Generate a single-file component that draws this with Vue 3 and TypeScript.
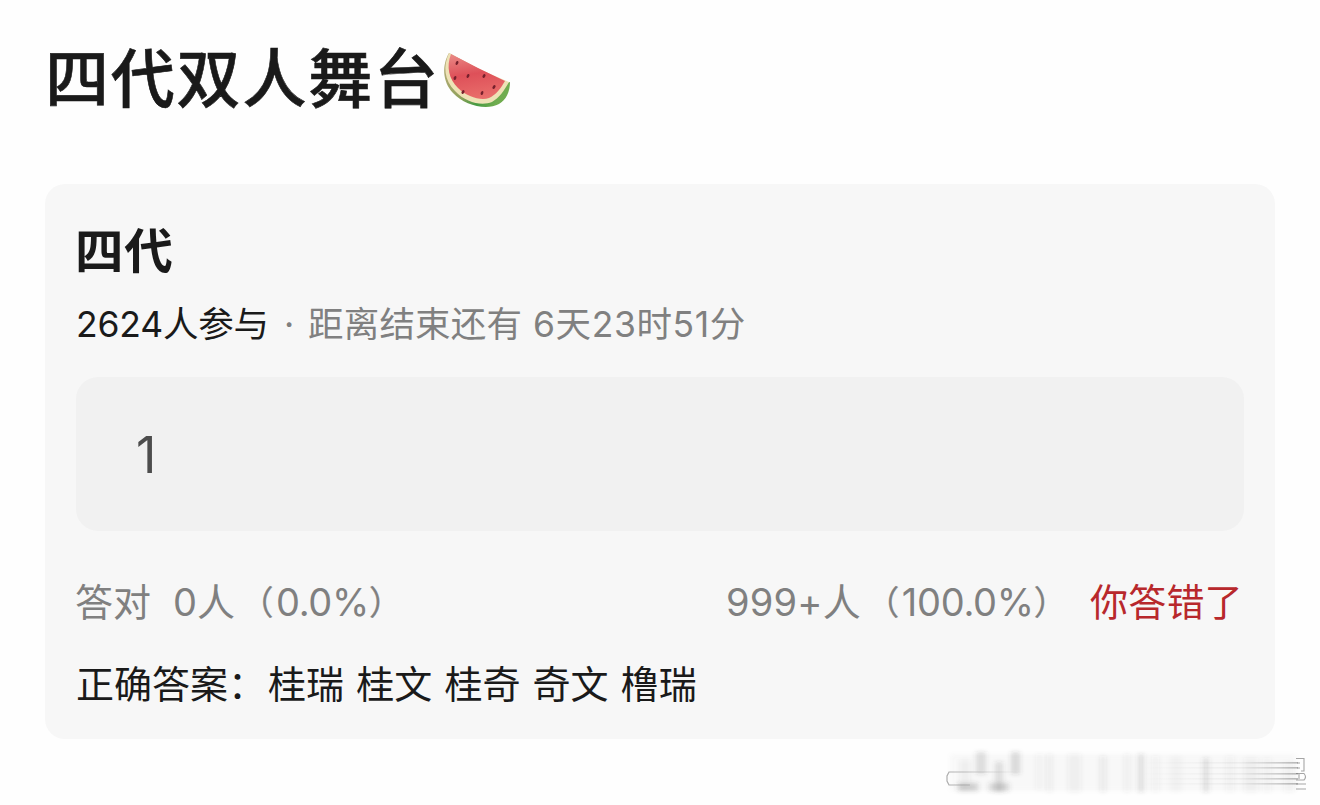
<script setup lang="ts">
interface Streak { x: number; y: number; w: number; h: number; o: number }
interface Seed { x: number; y: number; r: number }

const answers: string[] = ['桂瑞', '桂文', '桂奇', '奇文', '橹瑞']

const seeds: Seed[] = [
  { x: 22, y: 18, r: 25 }, { x: 33, y: 31, r: 25 }, { x: 20, y: 33, r: 20 },
  { x: 49, y: 31, r: 30 }, { x: 59, y: 42, r: 35 }, { x: 47, y: 48, r: 20 },
  { x: 28, y: 47, r: 30 },
]

const streaks: Streak[] = [
  { x: 30, y: 12, w: 10, h: 22, o: 0.11 }, { x: 65, y: 12, w: 9, h: 22, o: 0.12 },
  { x: 12, y: 43, w: 20, h: 8, o: 0.16 }, { x: 14, y: 20, w: 10, h: 30, o: 0.04 },
  { x: 49, y: 22, w: 8, h: 30, o: 0.11 }, { x: 43, y: 43, w: 20, h: 8, o: 0.14 },
  { x: 90, y: 14, w: 7, h: 36, o: 0.03 }, { x: 101, y: 14, w: 5, h: 38, o: 0.05 },
  { x: 122, y: 14, w: 13, h: 38, o: 0.04 }, { x: 154, y: 16, w: 6, h: 36, o: 0.06 },
  { x: 178, y: 14, w: 6, h: 38, o: 0.04 }, { x: 192, y: 14, w: 6, h: 38, o: 0.1 },
  { x: 206, y: 16, w: 7, h: 36, o: 0.03 }, { x: 224, y: 16, w: 12, h: 36, o: 0.02 },
  { x: 257, y: 18, w: 6, h: 34, o: 0.1 }, { x: 280, y: 16, w: 8, h: 36, o: 0.03 },
  { x: 298, y: 18, w: 14, h: 34, o: 0.04 }, { x: 317, y: 18, w: 8, h: 34, o: 0.03 },
  { x: 338, y: 22, w: 10, h: 30, o: 0.03 },
]
</script>

<template>
  <main class="page">
    <header class="title">
      <h1>四代双人舞台</h1>
      <svg class="melon" viewBox="0 0 84 70" width="84" height="70" aria-hidden="true">
        <defs>
          <linearGradient id="flesh" x1="0.3" y1="0" x2="0.5" y2="1">
            <stop offset="0" stop-color="#e98582" />
            <stop offset="0.45" stop-color="#de5059" />
            <stop offset="1" stop-color="#e96e6b" />
          </linearGradient>
          <linearGradient id="rind" x1="0" y1="0" x2="1" y2="0.4">
            <stop offset="0" stop-color="#b9ad7b" />
            <stop offset="0.5" stop-color="#8fa15b" />
            <stop offset="0.75" stop-color="#459a42" />
            <stop offset="1" stop-color="#70ac4f" />
          </linearGradient>
        </defs>
        <path d="M14 8 C7 20 7 36 18 48 C29 60 51 66 64 59 C71 55 75 47 75 37 L70 38 Z" fill="url(#rind)" />
        <path d="M14 8 C8 21 9 35 20 46 C31 58 47 61 57 57 C64 53 69 46 74 37 Q42 24 14 8 Z" fill="#eee2b6" />
        <path d="M16 9 C11 22 14 34 23 43 C32 52 46 56 54 53 C61 50 66 43 70 36 Q42 23 16 9 Z" fill="url(#flesh)" />
        <ellipse v-for="(s, i) in seeds" :key="i" :cx="s.x" :cy="s.y" rx="1.3" ry="2.1" fill="#76202c" :transform="`rotate(${s.r} ${s.x} ${s.y})`" />
      </svg>
    </header>

    <section class="card">
      <h2>四代</h2>
      <p class="meta">
        <span class="joined">2624人参与</span>
        <span class="dot">·</span>
        <span class="remain">距离结束还有</span>
        <span class="time">6天23时51分</span>
      </p>
      <div class="option">1</div>
      <div class="stats">
        <span class="label">答对</span>
        <span class="count">0人<i class="open">（</i><span class="rate">0.0%</span><i class="close">）</i></span>
        <span class="total">999+人<i class="open">（</i><span class="rate">100.0%</span><i class="close">）</i></span>
        <span class="wrong">你答错了</span>
      </div>
      <p class="answer">
        <span class="key">正确答案：</span>
        <span v-for="a in answers" :key="a" class="name">{{ a }}</span>
      </p>
    </section>

    <svg class="watermark" viewBox="0 0 390 65" width="390" height="65" aria-hidden="true">
      <defs>
        <filter id="soft" x="-10%" y="-20%" width="120%" height="140%"><feGaussianBlur stdDeviation="2.6 2" /></filter>
        <linearGradient id="lines" x1="0" x2="1">
          <stop offset="0" stop-color="#888" stop-opacity="0" />
          <stop offset="0.65" stop-color="#888" stop-opacity="0.1" />
          <stop offset="1" stop-color="#666" stop-opacity="0.45" />
        </linearGradient>
        <linearGradient id="stroke" x1="0" x2="1">
          <stop offset="0" stop-color="#777" stop-opacity="0.6" />
          <stop offset="1" stop-color="#999" stop-opacity="0" />
        </linearGradient>
      </defs>
      <rect x="20" y="14" width="346" height="37" fill="#777" opacity="0.04" filter="url(#soft)" />
      <g filter="url(#soft)" fill="#444">
        <rect v-for="(s, i) in streaks" :key="i" :x="s.x + 16" :y="s.y" :width="s.w" :height="s.h" :opacity="s.o * 1.4" />
      </g>
      <rect v-for="y in [22, 27, 33, 38, 43]" :key="y" x="210" :y="y" width="158" height="1.6" fill="url(#lines)" />
      <path d="M95 32 H19 L17 36 V41 L19 45 H40" fill="none" stroke="url(#stroke)" stroke-width="1.2" />
      <g fill="none" stroke="#777" stroke-width="1.1" opacity="0.65">
        <path d="M366 18.500 H374 V31 H371" />
        <path d="M367 23 H370 M367 28 H370 M366 33.500 H374 Q377 37 374 40 H366 M369 34 V39 M366 44 H376 M366 49 H376" />
      </g>
    </svg>
  </main>
</template>

<style>
body { margin: 0; background: #fff; }
</style>

<style scoped>
.page {
  position: relative;
  box-sizing: border-box;
  width: 1320px;
  height: 805px;
  padding: 30px 45px 0;
  background: #fefefe;
  color: #1a1a1a;
  font-family: Inter, "Noto Sans CJK SC", sans-serif;
  overflow: hidden;
}
h1, h2, p { margin: 0; }
.title { display: flex; align-items: center; height: 96px; }
h1 {
  font-size: 64px;
  font-weight: 500;
  line-height: 96px;
  letter-spacing: 1.8px;
  width: 390px;
  padding-top: 1px;
  white-space: nowrap;
  -webkit-text-stroke: 0.6px #1a1a1a;
}
.melon { flex: none; margin-top: 4px; }
.card {
  box-sizing: border-box;
  width: 1230px;
  height: 555px;
  margin-top: 58px;
  padding: 33px 31px 0;
  border-radius: 20px;
  background: #f7f7f7;
}
h2 { font-size: 48.5px; font-weight: 700; line-height: 70px; letter-spacing: 0.8px; margin-left: -1px; }
.meta {
  display: flex;
  height: 50px;
  line-height: 50px;
  margin-top: 13px;
  font-size: 35.5px;
  white-space: nowrap;
}
.joined { width: 207px; letter-spacing: -0.2px; }
.dot { width: 25px; padding-left: 1px; box-sizing: border-box; color: #808080; }
.remain { width: 225px; color: #808080; letter-spacing: 0.2px; }
.time { color: #808080; letter-spacing: 0.6px; }
.option {
  box-sizing: border-box;
  height: 154px;
  margin-top: 27px;
  padding-left: 60px;
  border-radius: 22px;
  background: #f1f1f1;
  color: #4d4d4d;
  font-size: 50px;
  line-height: 156px;
}
.stats {
  display: flex;
  height: 56px;
  line-height: 56px;
  margin-top: 43px;
  font-size: 38px;
  color: #808080;
  white-space: nowrap;
}
.label { width: 98px; margin-left: -1px; }
.total { width: 364px; margin-left: auto; letter-spacing: 0.2px; }
.rate { letter-spacing: -0.3px; }
.open, .close {
  display: inline-block;
  box-sizing: border-box;
  font-style: normal;
  font-size: 33.5px;
  line-height: 40px;
  vertical-align: 2px;
  letter-spacing: 0;
  -webkit-text-stroke: 0.3px #808080;
}
.open { width: 41px; padding-left: 5px; }
.close { width: 38px; }
.wrong { width: 154px; color: #b8282c; letter-spacing: 0.2px; }
.answer {
  display: flex;
  height: 56px;
  line-height: 56px;
  margin-top: 26px;
  font-size: 38px;
  white-space: nowrap;
}
.key { width: 192px; }
.name { width: 88.2px; }
.watermark { position: absolute; left: 930px; top: 740px; }
</style>
